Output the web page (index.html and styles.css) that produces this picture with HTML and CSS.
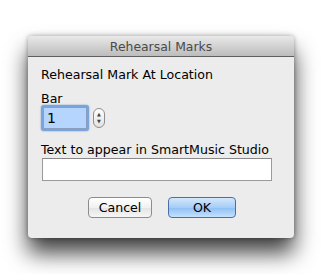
FILE: index.html
```html
<!DOCTYPE html>
<html lang="en">
<head>
    <meta charset="UTF-8">
    <title>Rehearsal Marks</title>
    <link rel="stylesheet" href="styles.css">
</head>
<body>
    <div class="window">
        <div class="titlebar">Rehearsal Marks</div>
        <div class="content">
            <div class="heading">Rehearsal Mark At Location</div>
            <div class="label">Bar</div>
            <div class="bar-row">
                <div class="focus"><input class="bar-input" type="text" value="1"></div>
                <div class="stepper">
                    <span class="up">&#9650;</span>
                    <span class="down">&#9660;</span>
                </div>
            </div>
            <div class="label text-label">Text to appear in SmartMusic Studio</div>
            <input class="text-input" type="text">
            <div class="buttons">
                <button class="btn">Cancel</button>
                <button class="btn default">OK</button>
            </div>
        </div>
    </div>
</body>
</html>
```

FILE: styles.css
```css
body {
    margin: 0;
    padding: 36px 0 0 28px;
    min-height: 274px;
    box-sizing: border-box;
    background: #ffffff;
    font-family: 'DejaVu Sans', 'Liberation Sans', sans-serif;
    font-size: 12.6px;
    color: #000;
}
.window {
    width: 266px;
    height: 202px;
    background: #ececec;
    border-radius: 4px;
    box-shadow: 0 15px 22px rgba(0,0,0,0.75), 0 0 5px rgba(0,0,0,0.35);
    overflow: hidden;
}
.titlebar {
    height: 20px;
    line-height: 21px;
    text-align: center;
    font-size: 12.4px;
    color: #4a4a4a;
    background: linear-gradient(#e9e9e9, #bcbcbc);
    border-bottom: 1px solid #5e5e5e;
}
.content {
    padding: 10px 0 0 13px;
}
.heading {
    line-height: 15px;
    margin-bottom: 9px;
}
.label {
    line-height: 15px;
}
.bar-row {
    display: flex;
    align-items: center;
    gap: 4px;
    margin-top: -1px;
}
.focus {
    padding: 2px;
    border-radius: 3px;
    background: #7aa5dc;
    box-shadow: 0 0 2px #6e9ad6;
}
.bar-input {
    display: block;
    box-sizing: border-box;
    width: 44px;
    height: 22px;
    margin: 0;
    padding: 0 0 0 3px;
    border: 1px solid #8a9fbf;
    background: #b5d5ff;
    font-family: 'DejaVu Sans', sans-serif;
    font-size: 14px;
    color: #000;
    outline: none;
}
.stepper {
    box-sizing: border-box;
    width: 12px;
    height: 20px;
    border: 1px solid #8e8e8e;
    border-radius: 6px;
    background: linear-gradient(#ffffff, #e2e2e2);
    display: flex;
    flex-direction: column;
    align-items: center;
    justify-content: center;
    font-size: 5px;
    line-height: 7px;
    color: #444;
}
.text-label {
    margin-top: 11px;
}
.text-input {
    display: block;
    box-sizing: border-box;
    width: 230px;
    height: 23px;
    margin: 1px 0 0 1px;
    border: 1px solid #9a9a9a;
    border-top-color: #888;
    background: #fff;
    outline: none;
}
.buttons {
    display: flex;
    gap: 16px;
    margin: 16px 0 0 47px;
}
.btn {
    box-sizing: border-box;
    width: 64px;
    height: 21px;
    padding: 0;
    border: 1px solid #8c8c8c;
    border-radius: 4px;
    background: linear-gradient(#ffffff, #f1f1f1 50%, #e4e4e4 51%, #f6f6f6);
    font-family: 'DejaVu Sans', sans-serif;
    font-size: 12.6px;
    color: #000;
}
.default {
    width: 68px;
    border-color: #4a6fa8;
    background: linear-gradient(#d4e7fc, #a6cdf6 50%, #8ebef4 51%, #c4e2fd);
}
```
